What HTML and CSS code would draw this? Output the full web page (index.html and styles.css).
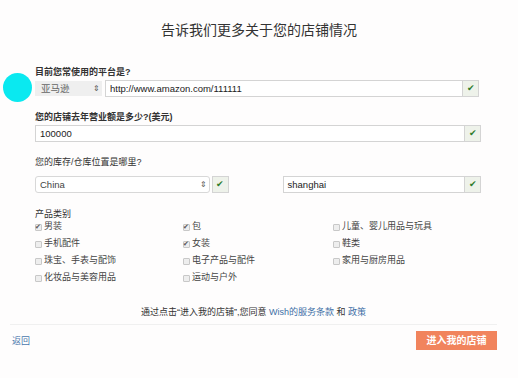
FILE: index.html
```html
<!DOCTYPE html>
<html lang="zh-CN">
<head>
  <meta charset="UTF-8" />
  <title>告诉我们更多关于您的店铺情况</title>
  <link rel="stylesheet" href="styles.css">
</head>
<body>

<div class="dot"></div>

<h1 class="title">告诉我们更多关于您的店铺情况</h1>

<div class="form">
  <div class="label bold">目前您常使用的平台是?</div>
  <div class="row r1">
    <div class="sel plat">亚马逊<span class="arr">&#8661;</span></div>
    <div class="inp url">http://www.amazon.com/111111</div>
    <div class="ok">&#10004;</div>
  </div>

  <div class="label bold gap">您的店铺去年营业额是多少?(美元)</div>
  <div class="row">
    <div class="inp full">100000</div>
    <div class="ok">&#10004;</div>
  </div>

  <div class="label gap">您的库存/仓库位置是哪里?</div>
  <div class="row r3">
    <div class="sel country">China<span class="arr">&#8661;</span></div>
    <div class="ok">&#10004;</div>
    <div class="inp city">shanghai</div>
    <div class="ok">&#10004;</div>
  </div>

  <div class="label cat">产品类别</div>
  <div class="cats">
    <div class="c on">男装</div>
    <div class="c on">包</div>
    <div class="c">儿童、婴儿用品与玩具</div>
    <div class="c">手机配件</div>
    <div class="c on">女装</div>
    <div class="c">鞋类</div>
    <div class="c">珠宝、手表与配饰</div>
    <div class="c">电子产品与配件</div>
    <div class="c">家用与厨房用品</div>
    <div class="c">化妆品与美容用品</div>
    <div class="c">运动与户外</div>
  </div>
</div>

<p class="terms">通过点击“进入我的店铺”,您同意 <a href="#">Wish的服务条款</a> 和 <a href="#">政策</a></p>

<div class="foot">
  <a href="#" class="back">返回</a>
  <a href="#" class="btn">进入我的店铺</a>
</div>

</body>
</html>
```

FILE: styles.css
```css
body { margin: 0; font-family: "Liberation Sans", "Noto Sans CJK SC", sans-serif; background: #fefdfd; color: #333; font-size: 9px; }
a { color: #3d6fa6; text-decoration: none; }

.dot { position: absolute; left: 3px; top: 73px; width: 29px; height: 29px; border-radius: 50%; background: #0ae9f0; }

.title { margin: 0; padding-top: 21px; height: 59px; box-sizing: border-box; text-align: center; font-size: 14px; line-height: 18px; font-weight: normal; color: #333; }

.form { padding-left: 35px; width: 446px; }
.label { height: 12px; line-height: 12px; margin-top: 7px; color: #333; }
.label.gap { margin-top: 14px; }
.bold { font-weight: bold; }
.row { display: flex; align-items: center; height: 17px; margin-top: 2px; }
.r3 { margin-top: 8px; }

.inp { height: 15px; line-height: 15px; border: 1px solid #d4d4d4; border-right: none; background: #fff; padding: 0 4px; box-sizing: content-box; color: #222; font-size: 9.5px; }
.url { width: 348px; }
.full { width: 422px; }
.city { width: 175px; margin-left: 54px; }

.ok { width: 15px; height: 15px; line-height: 15px; border: 1px solid #d4d4d4; background: #eef2ea; color: #2f7d2f; text-align: center; font-size: 9px; box-sizing: content-box; }

.sel { position: relative; height: 15px; line-height: 15px; padding: 0 4px; color: #444; font-size: 9.5px; }
.plat { width: 57px; margin-right: 3px; background: #efefef; color: #666; padding-left: 6px; }
.country { width: 167px; margin-right: 2px; border: 1px solid #d8d8d8; border-radius: 3px; background: #fff; }
.arr { position: absolute; right: 2px; top: 0; font-size: 8px; color: #555; }

.cat { margin-top: 15px; }
.cats { display: grid; grid-template-columns: 148px 150px 150px; grid-auto-rows: 17px; margin-top: -2px; }
.c { line-height: 17px; color: #444; padding-left: 9px; position: relative; }
.c::before { content: ""; position: absolute; left: 0; top: 6px; width: 5px; height: 5px; border: 1px solid #c8c8c8; background: #eee; border-radius: 1px; }
.c.on::after { content: "\2714"; position: absolute; left: 0; top: 0; font-size: 7px; color: #555; }

.terms { margin: 19px 21px 0 10px; line-height: 14px; text-align: center; font-size: 9px; color: #333; padding-bottom: 5px; border-bottom: 1px solid #f0f0f0; }

.foot { display: flex; justify-content: space-between; align-items: center; padding: 6px 21px 0 12px; }
.back { color: #4a78ad; }
.btn { display: inline-block; width: 81px; height: 19px; line-height: 19px; text-align: center; background: #f1845d; color: #fff; font-weight: bold; font-size: 10px; }
```
